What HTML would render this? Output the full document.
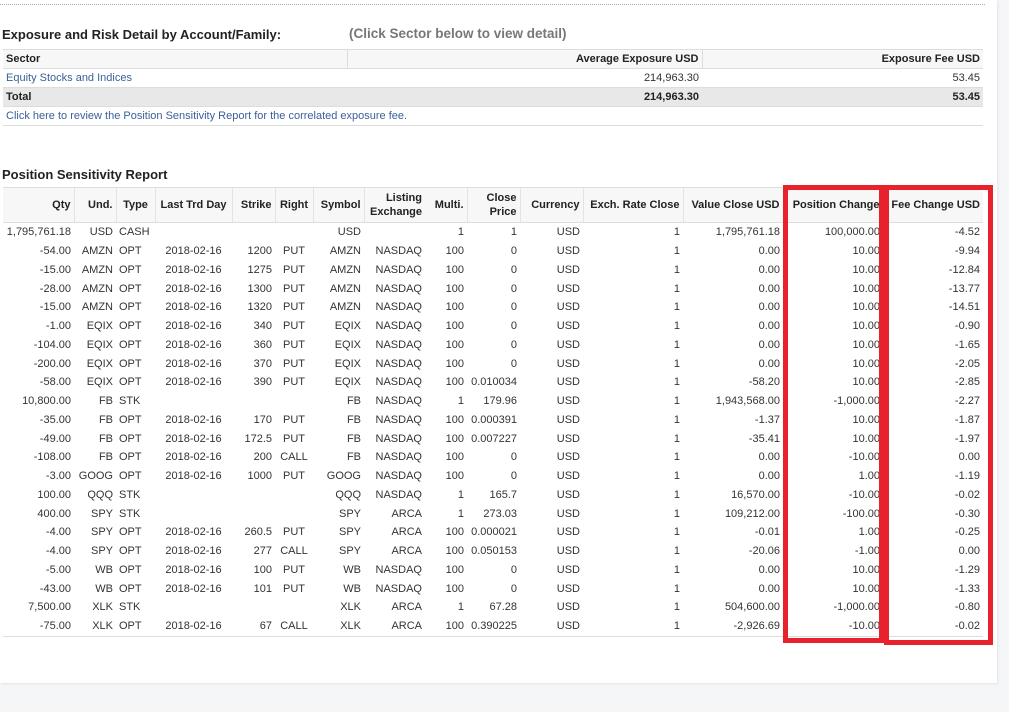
<!DOCTYPE html>
<html><head><style>
body{margin:0;background:#f5f6f8;font-family:"Liberation Sans",Arial,sans-serif;color:#333;}
.panel{position:absolute;left:0;top:0;width:997px;height:683px;background:#fff;box-shadow:1px 1px 2px #e4e4e4;}
.dots{position:absolute;left:0;top:4px;width:985px;border-top:1px dotted #aaa;}
h1{position:absolute;left:2px;top:27px;margin:0;font-size:13px;font-weight:bold;color:#222;}
.click{position:absolute;left:349px;top:26px;font-size:13.5px;font-weight:bold;color:#777;}
table{border-collapse:collapse;table-layout:fixed;font-size:11px;position:absolute;}
.exp{left:3px;top:49px;width:980px;}
.exp td{height:18px;padding:0 3px;border-bottom:1px solid #ddd;}
.exp tr.h td{font-weight:bold;background:#f7f7f7;color:#222;border-top:1px solid #ddd;}
.exp tr.t td{font-weight:bold;background:#e8e8e8;color:#222;}
a{color:#3a5f9a;text-decoration:none;}
h2{position:absolute;left:2px;top:167px;margin:0;font-size:13px;font-weight:bold;color:#222;}
.ps{left:3px;top:187px;width:980px;}
.ps th{height:34px;background:#f7f7f7;font-weight:bold;color:#222;text-align:right;padding:0 3px;border-top:1px solid #ddd;border-bottom:1px solid #ddd;border-left:1px solid #e3e3e3;line-height:14px;}
.ps th:first-child{border-left:none;}
.ps td{height:18.75px;padding:0 3px;text-align:right;white-space:nowrap;line-height:12px;}
.ps tr:last-child td{border-bottom:1px solid #ddd;}
.ps td:nth-child(3){text-align:left;}
.ps td:nth-child(4),.ps td:nth-child(6){text-align:center;}
.ps th:nth-child(3),.ps th:nth-child(4),.ps th:nth-child(6){text-align:center;}
.red{position:absolute;border:5px solid #e8222c;}
</style></head><body>
<div class="panel"></div>
<div class="dots"></div>
<h1>Exposure and Risk Detail by Account/Family:</h1>
<div class="click">(Click Sector below to view detail)</div>
<table class="exp">
<colgroup><col style="width:344px"><col style="width:355px"><col style="width:281px"></colgroup>
<tr class="h"><td>Sector</td><td style="text-align:right;border-left:1px solid #ddd">Average Exposure USD</td><td style="text-align:right;border-left:1px solid #ddd">Exposure Fee USD</td></tr>
<tr><td><a>Equity Stocks and Indices</a></td><td style="text-align:right">214,963.30</td><td style="text-align:right">53.45</td></tr>
<tr class="t"><td>Total</td><td style="text-align:right">214,963.30</td><td style="text-align:right">53.45</td></tr>
<tr><td colspan="3"><a>Click here to review the Position Sensitivity Report for the correlated exposure fee.</a></td></tr>
</table>
<h2>Position Sensitivity Report</h2>
<table class="ps">
<colgroup><col style="width:71px"><col style="width:42px"><col style="width:39px"><col style="width:77px"><col style="width:43px"><col style="width:38px"><col style="width:51px"><col style="width:61px"><col style="width:42px"><col style="width:53px"><col style="width:63px"><col style="width:100px"><col style="width:100px"><col style="width:100px"><col style="width:100px"></colgroup>
<tr><th>Qty</th><th>Und.</th><th>Type</th><th>Last Trd Day</th><th>Strike</th><th>Right</th><th>Symbol</th><th>Listing Exchange</th><th style="border-left:none">Multi.</th><th>Close Price</th><th>Currency</th><th>Exch. Rate Close</th><th>Value Close USD</th><th>Position Change</th><th>Fee Change USD</th></tr>
<tr><td>1,795,761.18</td><td>USD</td><td>CASH</td><td></td><td></td><td></td><td>USD</td><td></td><td>1</td><td>1</td><td>USD</td><td>1</td><td>1,795,761.18</td><td>100,000.00</td><td>-4.52</td></tr>
<tr><td>-54.00</td><td>AMZN</td><td>OPT</td><td>2018-02-16</td><td>1200</td><td>PUT</td><td>AMZN</td><td>NASDAQ</td><td>100</td><td>0</td><td>USD</td><td>1</td><td>0.00</td><td>10.00</td><td>-9.94</td></tr>
<tr><td>-15.00</td><td>AMZN</td><td>OPT</td><td>2018-02-16</td><td>1275</td><td>PUT</td><td>AMZN</td><td>NASDAQ</td><td>100</td><td>0</td><td>USD</td><td>1</td><td>0.00</td><td>10.00</td><td>-12.84</td></tr>
<tr><td>-28.00</td><td>AMZN</td><td>OPT</td><td>2018-02-16</td><td>1300</td><td>PUT</td><td>AMZN</td><td>NASDAQ</td><td>100</td><td>0</td><td>USD</td><td>1</td><td>0.00</td><td>10.00</td><td>-13.77</td></tr>
<tr><td>-15.00</td><td>AMZN</td><td>OPT</td><td>2018-02-16</td><td>1320</td><td>PUT</td><td>AMZN</td><td>NASDAQ</td><td>100</td><td>0</td><td>USD</td><td>1</td><td>0.00</td><td>10.00</td><td>-14.51</td></tr>
<tr><td>-1.00</td><td>EQIX</td><td>OPT</td><td>2018-02-16</td><td>340</td><td>PUT</td><td>EQIX</td><td>NASDAQ</td><td>100</td><td>0</td><td>USD</td><td>1</td><td>0.00</td><td>10.00</td><td>-0.90</td></tr>
<tr><td>-104.00</td><td>EQIX</td><td>OPT</td><td>2018-02-16</td><td>360</td><td>PUT</td><td>EQIX</td><td>NASDAQ</td><td>100</td><td>0</td><td>USD</td><td>1</td><td>0.00</td><td>10.00</td><td>-1.65</td></tr>
<tr><td>-200.00</td><td>EQIX</td><td>OPT</td><td>2018-02-16</td><td>370</td><td>PUT</td><td>EQIX</td><td>NASDAQ</td><td>100</td><td>0</td><td>USD</td><td>1</td><td>0.00</td><td>10.00</td><td>-2.05</td></tr>
<tr><td>-58.00</td><td>EQIX</td><td>OPT</td><td>2018-02-16</td><td>390</td><td>PUT</td><td>EQIX</td><td>NASDAQ</td><td>100</td><td>0.010034</td><td>USD</td><td>1</td><td>-58.20</td><td>10.00</td><td>-2.85</td></tr>
<tr><td>10,800.00</td><td>FB</td><td>STK</td><td></td><td></td><td></td><td>FB</td><td>NASDAQ</td><td>1</td><td>179.96</td><td>USD</td><td>1</td><td>1,943,568.00</td><td>-1,000.00</td><td>-2.27</td></tr>
<tr><td>-35.00</td><td>FB</td><td>OPT</td><td>2018-02-16</td><td>170</td><td>PUT</td><td>FB</td><td>NASDAQ</td><td>100</td><td>0.000391</td><td>USD</td><td>1</td><td>-1.37</td><td>10.00</td><td>-1.87</td></tr>
<tr><td>-49.00</td><td>FB</td><td>OPT</td><td>2018-02-16</td><td>172.5</td><td>PUT</td><td>FB</td><td>NASDAQ</td><td>100</td><td>0.007227</td><td>USD</td><td>1</td><td>-35.41</td><td>10.00</td><td>-1.97</td></tr>
<tr><td>-108.00</td><td>FB</td><td>OPT</td><td>2018-02-16</td><td>200</td><td>CALL</td><td>FB</td><td>NASDAQ</td><td>100</td><td>0</td><td>USD</td><td>1</td><td>0.00</td><td>-10.00</td><td>0.00</td></tr>
<tr><td>-3.00</td><td>GOOG</td><td>OPT</td><td>2018-02-16</td><td>1000</td><td>PUT</td><td>GOOG</td><td>NASDAQ</td><td>100</td><td>0</td><td>USD</td><td>1</td><td>0.00</td><td>1.00</td><td>-1.19</td></tr>
<tr><td>100.00</td><td>QQQ</td><td>STK</td><td></td><td></td><td></td><td>QQQ</td><td>NASDAQ</td><td>1</td><td>165.7</td><td>USD</td><td>1</td><td>16,570.00</td><td>-10.00</td><td>-0.02</td></tr>
<tr><td>400.00</td><td>SPY</td><td>STK</td><td></td><td></td><td></td><td>SPY</td><td>ARCA</td><td>1</td><td>273.03</td><td>USD</td><td>1</td><td>109,212.00</td><td>-100.00</td><td>-0.30</td></tr>
<tr><td>-4.00</td><td>SPY</td><td>OPT</td><td>2018-02-16</td><td>260.5</td><td>PUT</td><td>SPY</td><td>ARCA</td><td>100</td><td>0.000021</td><td>USD</td><td>1</td><td>-0.01</td><td>1.00</td><td>-0.25</td></tr>
<tr><td>-4.00</td><td>SPY</td><td>OPT</td><td>2018-02-16</td><td>277</td><td>CALL</td><td>SPY</td><td>ARCA</td><td>100</td><td>0.050153</td><td>USD</td><td>1</td><td>-20.06</td><td>-1.00</td><td>0.00</td></tr>
<tr><td>-5.00</td><td>WB</td><td>OPT</td><td>2018-02-16</td><td>100</td><td>PUT</td><td>WB</td><td>NASDAQ</td><td>100</td><td>0</td><td>USD</td><td>1</td><td>0.00</td><td>10.00</td><td>-1.29</td></tr>
<tr><td>-43.00</td><td>WB</td><td>OPT</td><td>2018-02-16</td><td>101</td><td>PUT</td><td>WB</td><td>NASDAQ</td><td>100</td><td>0</td><td>USD</td><td>1</td><td>0.00</td><td>10.00</td><td>-1.33</td></tr>
<tr><td>7,500.00</td><td>XLK</td><td>STK</td><td></td><td></td><td></td><td>XLK</td><td>ARCA</td><td>1</td><td>67.28</td><td>USD</td><td>1</td><td>504,600.00</td><td>-1,000.00</td><td>-0.80</td></tr>
<tr><td>-75.00</td><td>XLK</td><td>OPT</td><td>2018-02-16</td><td>67</td><td>CALL</td><td>XLK</td><td>ARCA</td><td>100</td><td>0.390225</td><td>USD</td><td>1</td><td>-2,926.69</td><td>-10.00</td><td>-0.02</td></tr>
</table>
<div class="red" style="left:783px;top:185px;width:91px;height:448px;"></div>
<div class="red" style="left:884px;top:185px;width:99px;height:450px;"></div>
</body></html>
